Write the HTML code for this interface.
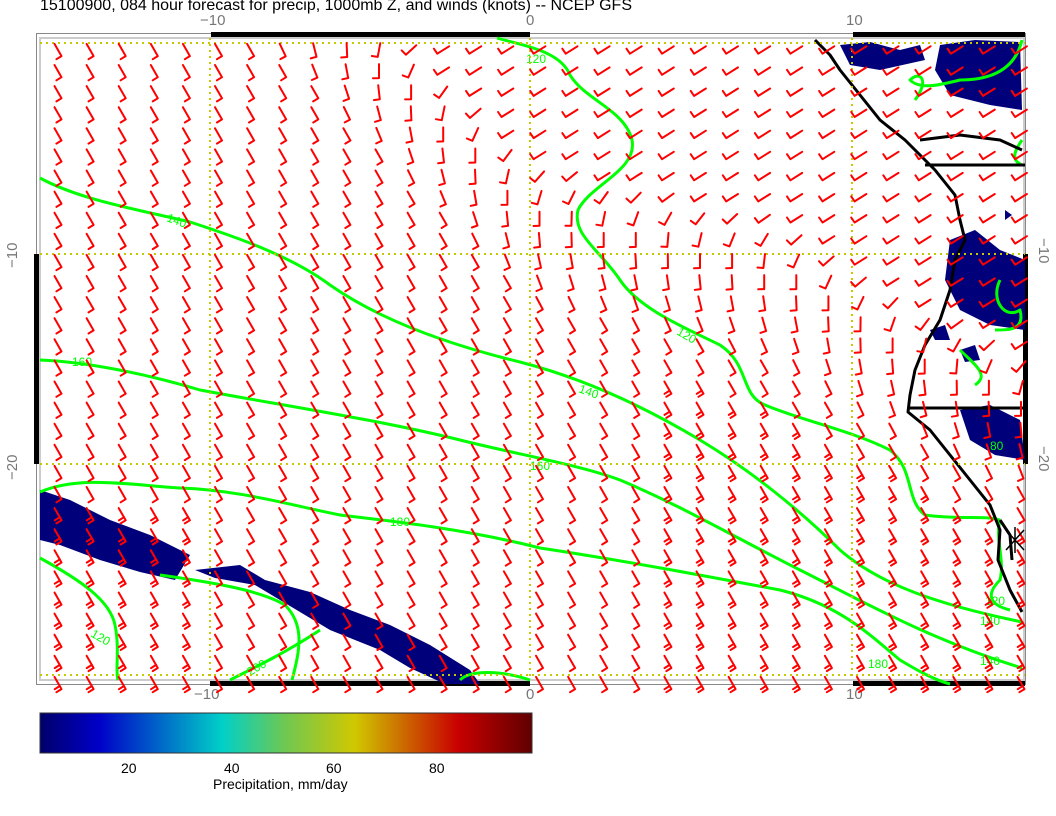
<!DOCTYPE html>
<html><head><meta charset="utf-8"><style>
html,body{margin:0;padding:0;background:#fff;width:1056px;height:816px;overflow:hidden;font-family:"Liberation Sans",sans-serif}
.t{position:absolute;white-space:nowrap}
</style></head><body>
<div class="t" style="left:40px;top:-3px;font-size:16px;color:#000">15100900, 084 hour forecast for precip, 1000mb Z, and winds (knots) -- NCEP GFS</div>
<div class="t" style="left:200px;top:12px;font-size:15px;color:#777">−10</div>
<div class="t" style="left:526px;top:12px;font-size:15px;color:#777">0</div>
<div class="t" style="left:846px;top:12px;font-size:15px;color:#777">10</div>
<div class="t" style="left:194px;top:686px;font-size:15px;color:#777">−10</div>
<div class="t" style="left:526px;top:686px;font-size:15px;color:#777">0</div>
<div class="t" style="left:846px;top:686px;font-size:15px;color:#777">10</div>
<div class="t" style="left:4px;top:268px;font-size:15px;color:#777;transform:rotate(-90deg);transform-origin:left top">−10</div>
<div class="t" style="left:4px;top:480px;font-size:15px;color:#777;transform:rotate(-90deg);transform-origin:left top">−20</div>
<div class="t" style="left:1052px;top:238px;font-size:15px;color:#777;transform:rotate(90deg);transform-origin:left top">−10</div>
<div class="t" style="left:1052px;top:446px;font-size:15px;color:#777;transform:rotate(90deg);transform-origin:left top">−20</div>
<svg id="m" width="1056" height="816" style="position:absolute;left:0;top:0" xmlns="http://www.w3.org/2000/svg">
<defs><linearGradient id="cb" x1="0" x2="1">
<stop offset="0" stop-color="#00006a"/><stop offset="0.12" stop-color="#0000c8"/><stop offset="0.37" stop-color="#00d0c8"/><stop offset="0.5" stop-color="#70c850"/><stop offset="0.64" stop-color="#d0c800"/><stop offset="0.85" stop-color="#c80000"/><stop offset="1" stop-color="#600000"/></linearGradient></defs>
<rect x="36.5" y="33.5" width="989" height="651" fill="none" stroke="#888" stroke-width="1"/>
<rect x="40" y="38" width="984" height="642" fill="none" stroke="#ccc" stroke-width="2"/>
<g fill="#000"><rect x="211" y="32" width="319" height="5"/><rect x="853" y="32" width="172" height="5"/>
<rect x="210" y="681" width="320" height="5"/><rect x="853" y="681" width="172" height="5"/>
<rect x="34" y="254" width="5" height="210"/><rect x="1023" y="254" width="5" height="210"/></g>
<g fill="#00007a">
<path d="M40,490 L70,500 L110,520 L150,535 L190,555 L175,580 L140,572 L100,560 L60,545 L40,540Z"/>
<path d="M195,570 L240,565 L265,580 L310,592 L350,610 L390,625 L430,645 L470,670 L480,684 L445,684 L410,668 L380,650 L330,630 L280,600 L255,585 L215,578Z"/>
<path d="M940,45 L975,40 L1020,42 L1022,110 L990,105 L950,95 L935,70Z"/>
<path d="M950,240 L975,230 L1000,250 L1025,260 L1025,330 L990,325 L960,310 L945,280Z"/>
<path d="M960,410 L990,405 L1020,420 L1025,460 L995,455 L970,440Z"/>
<path d="M840,45 L870,42 L900,50 L920,45 L925,60 L880,70 L850,65Z"/>
<path d="M1005,210 L1012,215 L1005,220Z"/><path d="M930,330 L945,325 L950,340 L935,340Z"/><path d="M960,350 L975,345 L980,360 L965,362Z"/>
</g>
<g fill="none" stroke="#00ff00" stroke-width="3" stroke-linejoin="round">
<path d="M497,38 C520,45 560,50 570,75 C585,100 625,110 632,140 C638,170 590,185 578,210 C572,235 600,250 620,280 C640,310 690,330 720,345 C750,365 740,395 765,405 C800,420 850,430 890,450 C915,470 905,500 925,515 C960,520 985,515 1000,520"/>
<path d="M40,178 C80,200 140,210 190,222 C230,235 290,255 330,285 C380,320 450,345 520,362 C590,380 650,410 700,440 C750,470 800,510 840,550 C880,585 940,605 1022,622"/>
<path d="M40,360 C90,362 150,375 200,390 C280,405 380,420 460,440 C520,455 580,465 620,480 C680,505 740,540 800,570 C860,600 930,640 1022,668"/>
<path d="M40,492 C80,475 130,485 180,488 C240,490 290,505 340,515 C400,522 470,530 540,548 C620,560 700,575 780,590 C840,605 870,635 900,660 C920,672 935,680 950,684"/>
<path d="M40,558 C80,580 110,600 115,625 C120,650 115,670 118,680"/>
<path d="M160,575 C210,582 260,590 285,605 C305,625 300,650 292,680"/>
<path d="M230,680 C260,665 290,650 320,630"/>
<path d="M460,680 C470,670 500,670 530,680"/>
<path d="M1022,40 C1015,70 990,80 960,80 C940,85 920,90 910,80 C920,70 930,80 915,100"/>
<path d="M1000,280 C990,300 1005,320 1020,310 C1025,330 1010,330 995,330"/>
<path d="M960,350 C975,365 990,375 975,385"/>
<path d="M1022,140 C1015,150 1010,160 1022,165"/>
<path d="M1000,520 C995,540 1005,560 1000,580 C985,595 990,605 1010,610"/>
</g>
<g fill="#00ff00" font-size="12" font-family="Liberation Sans">
<text x="526" y="63">120</text><text x="166" y="221" transform="rotate(20 166 221)">140</text><text x="72" y="366">160</text>
<text x="676" y="334" transform="rotate(30 676 334)">120</text><text x="578" y="392" transform="rotate(20 578 392)">140</text>
<text x="530" y="470">160</text><text x="390" y="526">180</text><text x="90" y="636" transform="rotate(30 90 636)">120</text>
<text x="250" y="676" transform="rotate(-30 250 676)">200</text><text x="985" y="605">120</text><text x="980" y="625">140</text>
<text x="980" y="665">140</text><text x="868" y="668">180</text><text x="990" y="450">80</text>
</g>
<g fill="none" stroke="#000" stroke-width="3" stroke-linejoin="round">
<path d="M815,40 L830,55 L840,70 L860,95 L880,120 L905,140 L920,155 L935,170 L955,195 L960,220 L965,240 L955,260 L950,290 L940,320 L925,345 L915,370 L910,395 L908,412 L930,430 L950,455 L970,480 L990,505 L1000,530 L998,560 L1010,590 L1022,612"/>
<path d="M920,140 L960,135 L1000,140 L1022,150"/><path d="M925,165 L1025,165"/><path d="M908,408 L1025,408"/>
<path d="M1000,520 L1010,535 L1012,560"/>
</g>
<g stroke="#c8c800" stroke-width="2" stroke-dasharray="2,4" fill="none">
<path d="M40,43H1025M40,254H1025M40,464H1025M40,675H1025M210,38V680M530,38V680M852,38V680"/>
</g>
<g id="barbs" stroke="#ff0000" stroke-width="2" fill="none" stroke-linecap="round" stroke-linejoin="round"></g>
<rect x="40" y="713" width="492" height="40" fill="url(#cb)" stroke="#333"/>
<path d="M1006,530 L1024,550 M1024,530 L1006,550 M1015,527 V553" stroke="#000" stroke-width="1.5"/>
</svg>
<div class="t" style="left:121px;top:760px;font-size:14px">20</div>
<div class="t" style="left:224px;top:760px;font-size:14px">40</div>
<div class="t" style="left:326px;top:760px;font-size:14px">60</div>
<div class="t" style="left:429px;top:760px;font-size:14px">80</div>
<div class="t" style="left:213px;top:776px;font-size:14px">Precipitation, mm/day</div>
<script>
var g=document.getElementById('barbs'),s='';
function cl(v){return v<0?0:v>1?1:v;}
var BX=[0,380,530,650,780,860,1060],BY=[-300,60,210,240,270,325,420];
function yb(x){for(var i=1;i<BX.length;i++){if(x<=BX[i]){var t=(x-BX[i-1])/(BX[i]-BX[i-1]);return BY[i-1]+t*(BY[i]-BY[i-1]);}}return 420;}
for(var r=0;r<31;r++){for(var c=0;c<31;c++){
var x=58+c*32.1,y=50+r*21.1;
var u=y-yb(x);
var dd=u<0?90+cl(-u/50)*58:90-cl((u-15)/80)*30;
var d=dd*Math.PI/180;
var L=14,jx=x+Math.cos(d)*L/2,jy=y+Math.sin(d)*L/2,tx=x-Math.cos(d)*L/2,ty=y-Math.sin(d)*L/2;
var b=d+88*Math.PI/180;var bx=jx+Math.cos(b)*6,by=jy+Math.sin(b)*6;
s+='<path d="M'+tx.toFixed(1)+','+ty.toFixed(1)+'L'+jx.toFixed(1)+','+jy.toFixed(1)+'L'+bx.toFixed(1)+','+by.toFixed(1)+'"/>';
var dbl=(x<200&&y>500)||(x>640&&y>yb(x)+130);
if(dbl){var mx=jx-Math.cos(d)*3.5,my=jy-Math.sin(d)*3.5;s+='<path d="M'+mx.toFixed(1)+','+my.toFixed(1)+'l'+(Math.cos(b)*6).toFixed(1)+','+(Math.sin(b)*6).toFixed(1)+'"/>';}
}}
g.innerHTML=s;
</script>
</body></html>
